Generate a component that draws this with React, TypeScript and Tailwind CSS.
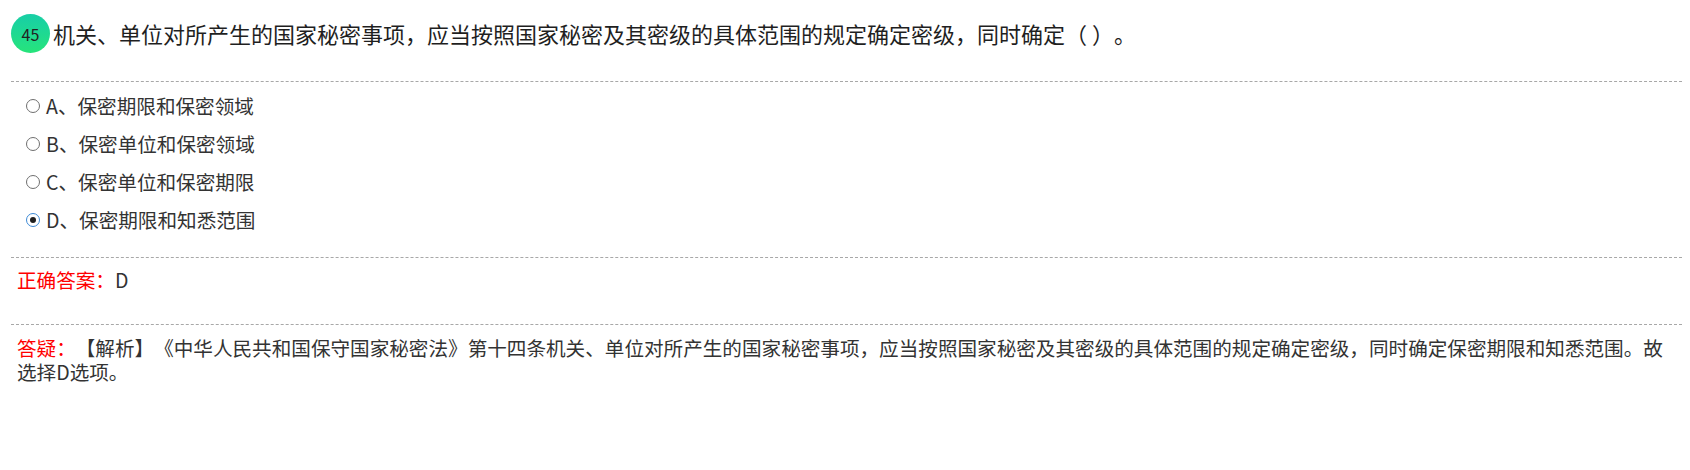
const options = [
  { key: "A", text: "保密期限和保密领域" },
  { key: "B", text: "保密单位和保密领域" },
  { key: "C", text: "保密单位和保密期限" },
  { key: "D", text: "保密期限和知悉范围" },
]

const picked = "D"

function Radio({ checked }: { checked: boolean }) {
  if (checked) {
    return (
      <span className="flex h-[14px] w-[14px] shrink-0 items-center justify-center rounded-full border-[1.5px] border-[#3d8ad6] bg-white">
        <span className="h-[6px] w-[6px] rounded-full bg-[#1f1f1f]" />
      </span>
    )
  }
  return <span className="h-[14px] w-[14px] shrink-0 rounded-full border-[1.5px] border-[#6f6f6f] bg-white" />
}

export default function App() {
  return (
    <main className="min-h-[470px] w-full bg-white pl-[11px] pr-[8px] font-['Noto_Sans_CJK_SC','Microsoft_YaHei',sans-serif] text-[#333] [text-spacing-trim:space-all]">
      <div className="flex items-center pt-[14px]">
        <div className="flex h-[39px] w-[39px] shrink-0 items-center justify-center rounded-full bg-linear-to-b from-[#18cea6] to-[#27e47a] text-[16px] text-[#222]">
          45
        </div>
        <h1 className="ml-[3px] text-[22px] leading-[39px] text-[#1f1f1f]">
          机关、单位对所产生的国家秘密事项，应当按照国家秘密及其密级的具体范围的规定确定密级，同时确定（ ）。
        </h1>
      </div>

      <div className="mt-[28px] border-t border-dashed border-[#a8a8a8]" />

      <ul className="mt-[5px]">
        {options.map((o) => (
          <li key={o.key} className="flex h-[38px] items-center gap-[6px] pl-[15px] text-[19.6px]">
            <Radio checked={o.key === picked} />
            <span>
              {o.key}、{o.text}
            </span>
          </li>
        ))}
      </ul>

      <div className="mt-[18px] border-t border-dashed border-[#a8a8a8]" />

      <p className="mt-[10px] pl-[6px] text-[19.6px] leading-[24px]">
        <span className="text-[#ff0000]">正确答案：</span>D
      </p>

      <div className="mt-[32px] border-t border-dashed border-[#a8a8a8]" />

      <p className="mt-[11px] pl-[6px] pr-[6px] text-[19.6px] leading-[24px]">
        <span className="text-[#ff0000]">答疑：</span>
        【解析】《中华人民共和国保守国家秘密法》第十四条机关、单位对所产生的国家秘密事项，应当按照国家秘密及其密级的具体范围的规定确定密级，同时确定保密期限和知悉范围。故选择D选项。
      </p>
    </main>
  )
}
